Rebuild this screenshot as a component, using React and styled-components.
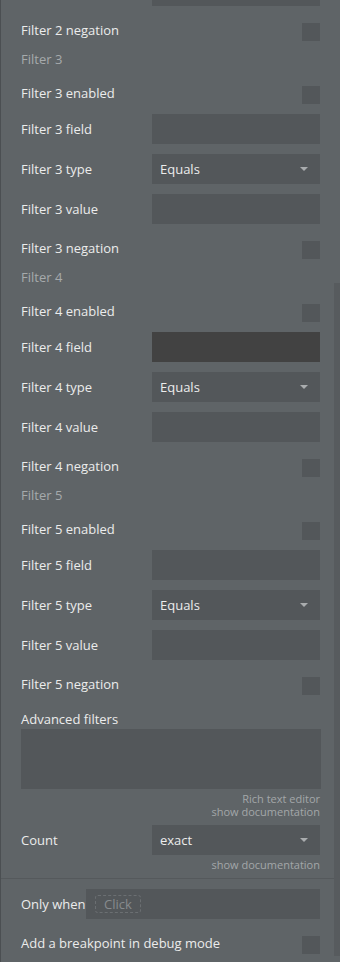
import React from 'react';
import styled, { createGlobalStyle } from 'styled-components';

const GlobalStyle = createGlobalStyle`
    html, body {
        margin: 0;
        padding: 0;
        background: #5f6467;
    }
`;

const Panel = styled.div`
    position: relative;
    width: 340px;
    height: 962px;
    overflow: hidden;
    box-sizing: border-box;
    border-left: 1px solid #4b4f52;
    background: #5f6467;
    font-family: "Open Sans", "Liberation Sans", sans-serif;
    font-size: 13px;
    color: #ececec;
    display: flex;
    flex-direction: column;
`;

const Section = styled.div`
    display: flex;
    flex-direction: column;
    padding: 0 20px 0 20px;
    ${(p) => p.$divided && `
        border-top: 1px solid #55595c;
        margin-top: 7px;
        padding-top: 10px;
    `}
`;

const Row = styled.div`
    display: flex;
    align-items: center;
    justify-content: space-between;
    height: ${(p) => p.$height || 30}px;
    margin-top: ${(p) => p.$gap ?? 10}px;
    flex-shrink: 0;
`;

const EndRow = styled(Row)`
    justify-content: flex-end;
`;

const Label = styled.span`
    line-height: 16px;
    white-space: nowrap;
    margin-top: ${(p) => (p.$raise ? -4 : 0)}px;
`;

const BlockLabel = styled.div`
    line-height: 16px;
    margin-top: 16px;
`;

const GroupTitle = styled.div`
    height: 16px;
    line-height: 16px;
    margin-top: 10px;
    color: #a6aaac;
`;

const Field = styled.div`
    width: 168px;
    height: 30px;
    box-sizing: border-box;
    background: ${(p) => (p.$focused ? '#424242' : '#53575a')};
`;

const Dropdown = styled.div`
    width: 168px;
    height: 30px;
    box-sizing: border-box;
    background: #53575a;
    display: flex;
    align-items: center;
    justify-content: space-between;
    padding: 0 12px 0 8px;
    color: #ececec;
`;

const Caret = styled.span`
    width: 0;
    height: 0;
    border-left: 4px solid transparent;
    border-right: 4px solid transparent;
    border-top: 4px solid #a9acae;
`;

const Checkbox = styled.div`
    width: 18px;
    height: 18px;
    background: #53575a;
`;

const TextArea = styled.div`
    width: 300px;
    height: 60px;
    margin-top: 2px;
    background: #53575a;
`;

const Hint = styled.div`
    font-size: 11px;
    line-height: 13px;
    color: #a3a7a9;
    text-align: right;
    margin-top: ${(p) => p.$gap ?? 0}px;
`;

const WideField = styled.div`
    width: 234px;
    height: 30px;
    background: #53575a;
    display: flex;
    align-items: center;
    padding-left: 9px;
    box-sizing: border-box;
`;

const ClickChip = styled.span`
    border: 1px dashed #6b6f72;
    border-radius: 3px;
    color: #878b8e;
    padding: 0 8px;
    height: 16px;
    line-height: 16px;
`;

const Scrollbar = styled.div`
    position: absolute;
    right: 0;
    top: 283px;
    width: 6px;
    height: 673px;
    background: #575b5e;
`;

function CheckRow({ label, gap }) {
    return (
        <Row $height={18} $gap={gap}>
            <Label $raise>{label}</Label>
            <Checkbox />
        </Row>
    );
}

function FilterGroup({ n, focusField }) {
    return (
        <>
            <GroupTitle>Filter {n}</GroupTitle>
            <CheckRow label={`Filter ${n} enabled`} gap={19} />
            <Row>
                <Label>Filter {n} field</Label>
                <Field $focused={focusField} />
            </Row>
            <Row>
                <Label>Filter {n} type</Label>
                <Dropdown>
                    Equals
                    <Caret />
                </Dropdown>
            </Row>
            <Row>
                <Label>Filter {n} value</Label>
                <Field />
            </Row>
            <CheckRow label={`Filter ${n} negation`} gap={17} />
        </>
    );
}

export default function App() {
    return (
        <>
            <GlobalStyle />
            <Panel>
                <Section>
                    <EndRow $gap={-24}>
                        <Field />
                    </EndRow>
                    <CheckRow label="Filter 2 negation" gap={17} />
                    <FilterGroup n={3} />
                    <FilterGroup n={4} focusField />
                    <FilterGroup n={5} />

                    <BlockLabel>Advanced filters</BlockLabel>
                    <TextArea />
                    <Hint $gap={3}>Rich text editor</Hint>
                    <Hint>show documentation</Hint>
                    <Row $gap={7}>
                        <Label>Count</Label>
                        <Dropdown>
                            exact
                            <Caret />
                        </Dropdown>
                    </Row>
                    <Hint $gap={3}>show documentation</Hint>
                </Section>
                <Section $divided>
                    <Row $gap={0}>
                        <Label>Only when</Label>
                        <WideField>
                            <ClickChip>Click</ClickChip>
                        </WideField>
                    </Row>
                    <CheckRow label="Add a breakpoint in debug mode" gap={17} />
                </Section>
                <Scrollbar />
            </Panel>
        </>
    );
}
